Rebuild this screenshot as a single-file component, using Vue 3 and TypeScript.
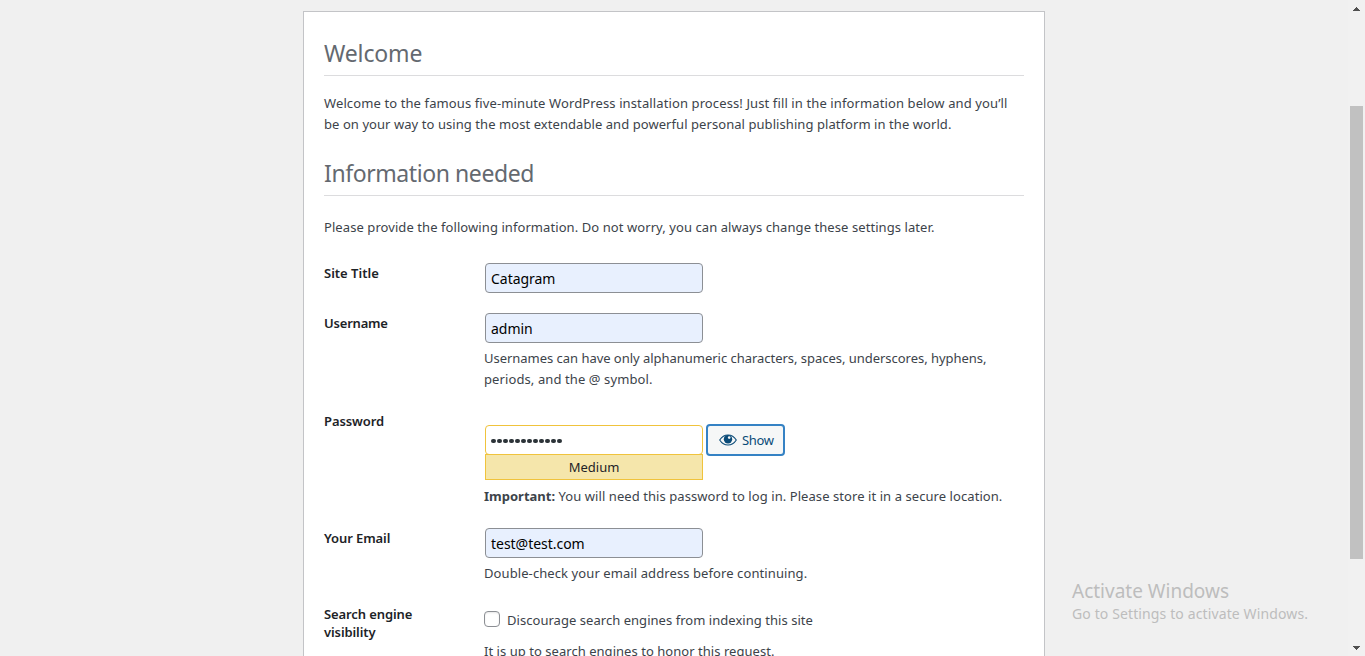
<script setup lang="ts">
import { ref } from 'vue'

const siteTitle = ref('Catagram')
const username = ref('admin')
const email = ref('test@test.com')
const passwordLength = 12
</script>

<template>
  <div class="page">
    <main class="card">
      <h1 class="welcome">Welcome</h1>
      <p class="intro"><span class="intro-first">Welcome to the famous five-minute WordPress installation process! Just fill in the information below and you’ll</span><br /><span class="intro-second">be on your way to using the most extendable and powerful personal publishing platform in the world.</span></p>
      <h1 class="second">Information needed</h1>
      <p class="lead">Please provide the following information. Do not worry, you can always change these settings later.</p>
      <form class="form" @submit.prevent>
        <div class="row title">
          <label>Site Title</label>
          <div><div class="field">{{ siteTitle }}</div></div>
        </div>
        <div class="row user">
          <label>Username</label>
          <div>
            <div class="field">{{ username }}</div>
            <p class="hint"><span class="rule-first">Usernames can have only alphanumeric characters, spaces, underscores, hyphens,</span><br /><span class="rule-second">periods, and the @ symbol.</span></p>
          </div>
        </div>
        <div class="row pass">
          <label>Password</label>
          <div>
            <div class="passline">
              <div>
                <div class="field secret"><i v-for="n in passwordLength" :key="n" class="dot"></i></div>
                <div class="strength">Medium</div>
              </div>
              <button class="show" type="button">
                <svg width="18" height="12" viewBox="0 0 18 12">
                  <path d="M0.7 6C2.8 2.700 5.700 1 9 1s6.200 1.700 8.300 5C15.200 9.300 12.300 11 9 11S2.800 9.300.7 6z" fill="none" stroke="currentColor" stroke-width="1.100" />
                  <circle cx="9" cy="5.200" r="4.200" fill="currentColor" />
                  <circle cx="10.200" cy="3.600" r="1.300" fill="#f6f7f7" />
                </svg>
                <span>Show</span>
              </button>
            </div>
            <p class="hint"><strong>Important:</strong><span class="after"> You will need this password to log in. Please store it in a secure location.</span></p>
          </div>
        </div>
        <div class="row mail">
          <label>Your Email</label>
          <div>
            <div class="field">{{ email }}</div>
            <p class="hint check-email">Double-check your email address before continuing.</p>
          </div>
        </div>
        <div class="row search">
          <label>Search engine<br />visibility</label>
          <div>
            <div class="check"><span class="box"></span><span>Discourage search engines from indexing this site</span></div>
            <p class="hint">It is up to search engines to honor this request.</p>
          </div>
        </div>
      </form>
    </main>
    <aside class="watermark">
      <div class="big">Activate Windows</div>
      <div class="small">Go to Settings to activate Windows.</div>
    </aside>
    <div class="scrollbar">
      <svg class="arrow" width="7" height="4" viewBox="0 0 7 4" shape-rendering="crispEdges"><path d="M3 0h1v1h1v1h1v1h1v1H0V3h1V2h1V1h1z" fill="#505050" /></svg>
      <div class="thumb"></div>
      <svg class="arrow" width="7" height="4" viewBox="0 0 7 4" shape-rendering="crispEdges"><path d="M0 0h7v1H6v1H5v1H4v1H3V3H2V2H1V1H0z" fill="#505050" /></svg>
    </div>
  </div>
</template>

<style>
html, body { margin: 0; background: #f0f0f0; overflow: hidden; }
</style>

<style scoped>
* { box-sizing: border-box; }
.page {
  position: relative;
  width: 1365px;
  height: 656px;
  overflow: hidden;
  font-family: "Noto Sans", sans-serif;
  font-size: 13px;
  line-height: 21px;
  color: #3c434a;
  background: #f0f0f0;
}
.card {
  width: 742px;
  height: 700px;
  margin: 11px 0 0 303px;
  padding: 20px;
  background: #fff;
  border: 1px solid #c3c4c7;
}
h1 {
  margin: 0;
  height: 44px;
  border-bottom: 1px solid #dcdcde;
  font-size: 23px;
  font-weight: 400;
  line-height: 42px;
  color: #646970;
}
.welcome { letter-spacing: -0.15px; }
.second { margin-top: 17px; letter-spacing: -0.42px; }
.intro { margin: 17px 0 0; height: 42px; white-space: nowrap; }
.intro-first { letter-spacing: 0.113px; }
.intro-second { letter-spacing: 0.065px; }
.lead { margin: 21px 0 0; letter-spacing: 0.075px; }
.form { display: flex; flex-direction: column; margin-top: 25px; }
.row { display: grid; grid-template-columns: 160px 1fr; }
.row label { font-weight: 600; color: #1d2327; line-height: 18px; padding-top: 1px; letter-spacing: -0.1px; }
.title { height: 50px; }
.title label { letter-spacing: 0; }
.user { height: 98px; }
.user label { letter-spacing: -0.2px; }
.pass { height: 117px; }
.mail { height: 76px; }
.field {
  margin-left: 1px;
  width: 218px;
  height: 30px;
  border: 1px solid #8c8f94;
  border-radius: 4px;
  background: #e8f0fe;
  padding: 0 5px;
  font-size: 14px;
  line-height: 29px;
  letter-spacing: -0.03px;
  color: #000;
}
.hint { margin: 5px 0 0; white-space: nowrap; letter-spacing: 0.04px; }
.rule-first { letter-spacing: -0.03px; }
.rule-second { letter-spacing: 0.1px; }
.check-email { letter-spacing: 0.09px; }
.after { white-space: pre; letter-spacing: 0.07px; }
.passline { display: flex; padding-top: 14px; }
.pass .hint { margin-top: 6px; }
.pass strong { letter-spacing: 0; }
.secret { background: #fff; border-color: #f0c33c; display: flex; align-items: center; gap: 1.450px; padding-top: 2px; }
.dot { width: 4.600px; height: 4.600px; border-radius: 50%; background: #2c3338; }
.strength {
  margin: -1px 0 0 1px;
  width: 218px;
  height: 26px;
  border: 1px solid #f0c33c;
  background: #f5e6ab;
  text-align: center;
  line-height: 25px;
  color: #1d2327;
}
.show {
  margin: -1px 0 0 3px;
  width: 79px;
  height: 32px;
  border: 2px solid #3582c4;
  border-radius: 4px;
  background: #f6f7f7;
  color: #0a4b78;
  display: flex;
  align-items: center;
  padding: 0 0 0 11px;
  gap: 5px;
  font: inherit;
  letter-spacing: -0.35px;
}
.check { display: flex; gap: 7px; padding-top: 6px; letter-spacing: 0.04px; }
.box { width: 16px; height: 16px; margin-top: 1px; border: 1px solid #8c8f94; border-radius: 4px; background: #fff; box-shadow: inset 0 1px 2px rgba(0, 0, 0, 0.1); }
.search .hint { margin-top: 10px; }
.watermark { position: absolute; left: 1072px; top: 579px; color: #bdbdbd; white-space: nowrap; }
.big { font-size: 19px; line-height: 24px; }
.small { font-size: 14px; line-height: 22px; letter-spacing: 0.12px; }
.scrollbar {
  position: absolute;
  right: 0;
  top: 0;
  width: 17px;
  height: 656px;
  padding: 7px 0 6px;
  display: flex;
  flex-direction: column;
  justify-content: space-between;
  background: #f1f1f1;
}
.arrow { flex: none; margin-left: 5px; }
.thumb { flex: none; margin: 95px 0 auto 2px; width: 13px; height: 453px; background: #c1c1c1; }
</style>
